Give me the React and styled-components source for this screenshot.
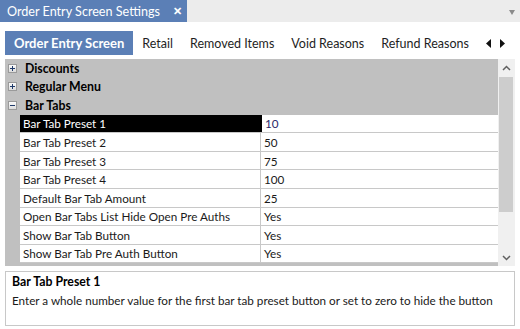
import React from 'react';
import styled, { createGlobalStyle } from 'styled-components';

const GlobalStyle = createGlobalStyle`
  html, body {
    margin: 0;
    padding: 0;
    background: #ffffff;
  }
  body {
    font-family: Lato, "Open Sans", "Liberation Sans", sans-serif;
    color: #000;
  }
`;

const BLUE = '#5b7fb6';
const ROW_H = '18.57px';

const Window = styled.div`
  width: 520px;
  height: 329px;
  background: #fff;
  overflow: hidden;
  display: flex;
  flex-direction: column;
`;

const TitleBar = styled.div`
  height: 22px;
  background: #ececec;
  display: flex;
  align-items: stretch;
`;

const DocTab = styled.div`
  width: 187px;
  box-sizing: border-box;
  background: ${BLUE};
  color: #fff;
  font-size: 12.6px;
  display: flex;
  align-items: center;
  padding-left: 7px;
  white-space: nowrap;
`;

const CloseMark = styled.span`
  margin-left: 13px;
  font-size: 11px;
  font-weight: 700;
`;

const Spacer = styled.div`
  flex: 1;
`;

const DropArrow = styled.div`
  width: 0;
  height: 0;
  margin: 10px 5px 0 0;
  border-left: 3.5px solid transparent;
  border-right: 3.5px solid transparent;
  border-top: 5px solid #8a8a8a;
`;

const Body = styled.div`
  padding: 0 5px;
  display: flex;
  flex-direction: column;
`;

const TabStrip = styled.div`
  margin-top: 9px;
  height: 24px;
  display: flex;
  align-items: stretch;
`;

const Tab = styled.div`
  display: flex;
  align-items: center;
  padding: 0 ${p => (p.$active ? '9px' : '0')};
  margin-right: ${p => (p.$active ? '9px' : '17px')};
  background: ${p => (p.$active ? BLUE : 'transparent')};
  color: ${p => (p.$active ? '#fff' : '#1e1e1e')};
  font-weight: ${p => (p.$active ? 700 : 400)};
  font-size: ${p => (p.$active ? '13px' : '12.5px')};
  white-space: nowrap;
`;

const Arrows = styled.div`
  display: flex;
  align-items: center;
  gap: 9px;
  margin-left: 0;
`;

const Grid = styled.div`
  margin-top: 4px;
  height: 207px;
  display: flex;
`;

const Rows = styled.div`
  flex: 1;
  background: #c0c0c0;
  overflow: hidden;
`;

const CategoryRow = styled.div`
  height: ${ROW_H};
  display: flex;
  align-items: center;
  font-weight: 700;
  font-size: 12.3px;
`;

const Expander = styled.span`
  width: 7px;
  height: 7px;
  margin: 0 8px 0 3px;
  border: 1px solid #9a9a9a;
  background: linear-gradient(#fbfbfb, #dcdcdc);
  display: flex;
  align-items: center;
  justify-content: center;
  position: relative;
  &::before {
    content: '';
    position: absolute;
    width: 5px;
    height: 1px;
    background: #1f3a6a;
  }
  &::after {
    content: '';
    position: absolute;
    width: 1px;
    height: 5px;
    background: #1f3a6a;
    display: ${p => (p.$open ? 'none' : 'block')};
  }
`;

const PropRow = styled.div`
  height: ${ROW_H};
  box-sizing: border-box;
  margin-left: 15px;
  display: grid;
  grid-template-columns: 241px 1fr;
  border-bottom: 1px solid #c8c8c8;
  font-size: 11.7px;
`;

const Label = styled.div`
  display: flex;
  align-items: center;
  padding-left: 3px;
  background: ${p => (p.$selected ? '#000' : '#fff')};
  color: ${p => (p.$selected ? '#fff' : '#1a1a1a')};
  border-right: 1px solid ${p => (p.$selected ? '#000' : '#c8c8c8')};
  white-space: nowrap;
  overflow: hidden;
`;

const Value = styled.div`
  display: flex;
  align-items: center;
  padding-left: 3px;
  background: #fff;
  color: ${p => (p.$selected ? '#2a2a6a' : '#1a1a1a')};
  border-left: ${p => (p.$selected ? '1px solid #000' : 'none')};
`;

const Scrollbar = styled.div`
  width: 17px;
  background: #f0f0f0;
  display: flex;
  flex-direction: column;
`;

const ScrollButton = styled.div`
  height: 17px;
  display: flex;
  align-items: center;
  justify-content: center;
  background: #f0f0f0;
`;

const Thumb = styled.div`
  height: 135px;
  margin: 1px 2px 0 1px;
  background: #cdcdcd;
`;

const Description = styled.div`
  margin-top: 5px;
  height: 55px;
  box-sizing: border-box;
  border: 1px solid #c8c8c8;
  padding: 1px 0 0 6px;
  font-size: 11.7px;
  line-height: 18px;
`;

const DescTitle = styled.div`
  font-weight: 700;
  font-size: 12.3px;
`;

const DescText = styled.div`
  color: #1a1a1a;
  white-space: nowrap;
`;

const Chevron = ({ up }) => (
  <svg width="9" height="6" viewBox="0 0 9 6">
    <polyline
      points={up ? '1,5 4.5,1.5 8,5' : '1,1 4.5,4.5 8,1'}
      fill="none"
      stroke="#606060"
      strokeWidth="1.5"
    />
  </svg>
);

const Triangle = ({ left }) => (
  <svg width="5" height="9" viewBox="0 0 5 9">
    <polygon points={left ? '5,0 5,9 0,4.5' : '0,0 0,9 5,4.5'} fill="#111" />
  </svg>
);

const TABS = ['Order Entry Screen', 'Retail', 'Removed Items', 'Void Reasons', 'Refund Reasons'];

const CATEGORIES = [
  { name: 'Discounts', open: false },
  { name: 'Regular Menu', open: false },
  { name: 'Bar Tabs', open: true },
];

const PROPERTIES = [
  { label: 'Bar Tab Preset 1', value: '10' },
  { label: 'Bar Tab Preset 2', value: '50' },
  { label: 'Bar Tab Preset 3', value: '75' },
  { label: 'Bar Tab Preset 4', value: '100' },
  { label: 'Default Bar Tab Amount', value: '25' },
  { label: 'Open Bar Tabs List Hide Open Pre Auths', value: 'Yes' },
  { label: 'Show Bar Tab Button', value: 'Yes' },
  { label: 'Show Bar Tab Pre Auth Button', value: 'Yes' },
];

export default function App() {
  const selected = 0;
  return (
    <Window>
      <GlobalStyle />
      <TitleBar>
        <DocTab>
          Order Entry Screen Settings
          <CloseMark>✕</CloseMark>
        </DocTab>
        <Spacer />
        <DropArrow />
      </TitleBar>

      <Body>
        <TabStrip>
          {TABS.map((t, i) => (
            <Tab key={t} $active={i === 0}>{t}</Tab>
          ))}
          <Arrows>
            <Triangle left />
            <Triangle />
          </Arrows>
        </TabStrip>

        <Grid>
          <Rows>
            {CATEGORIES.map(c => (
              <CategoryRow key={c.name}>
                <Expander $open={c.open} />
                {c.name}
              </CategoryRow>
            ))}
            {PROPERTIES.map((p, i) => (
              <PropRow key={p.label}>
                <Label $selected={i === selected}>{p.label}</Label>
                <Value $selected={i === selected}>{p.value}</Value>
              </PropRow>
            ))}
          </Rows>
          <Scrollbar>
            <ScrollButton><Chevron up /></ScrollButton>
            <Thumb />
            <Spacer />
            <ScrollButton><Chevron /></ScrollButton>
          </Scrollbar>
        </Grid>

        <Description>
          <DescTitle>{PROPERTIES[selected].label}</DescTitle>
          <DescText>
            Enter a whole number value for the first bar tab preset button or set to zero to hide the button
          </DescText>
        </Description>
      </Body>
    </Window>
  );
}
